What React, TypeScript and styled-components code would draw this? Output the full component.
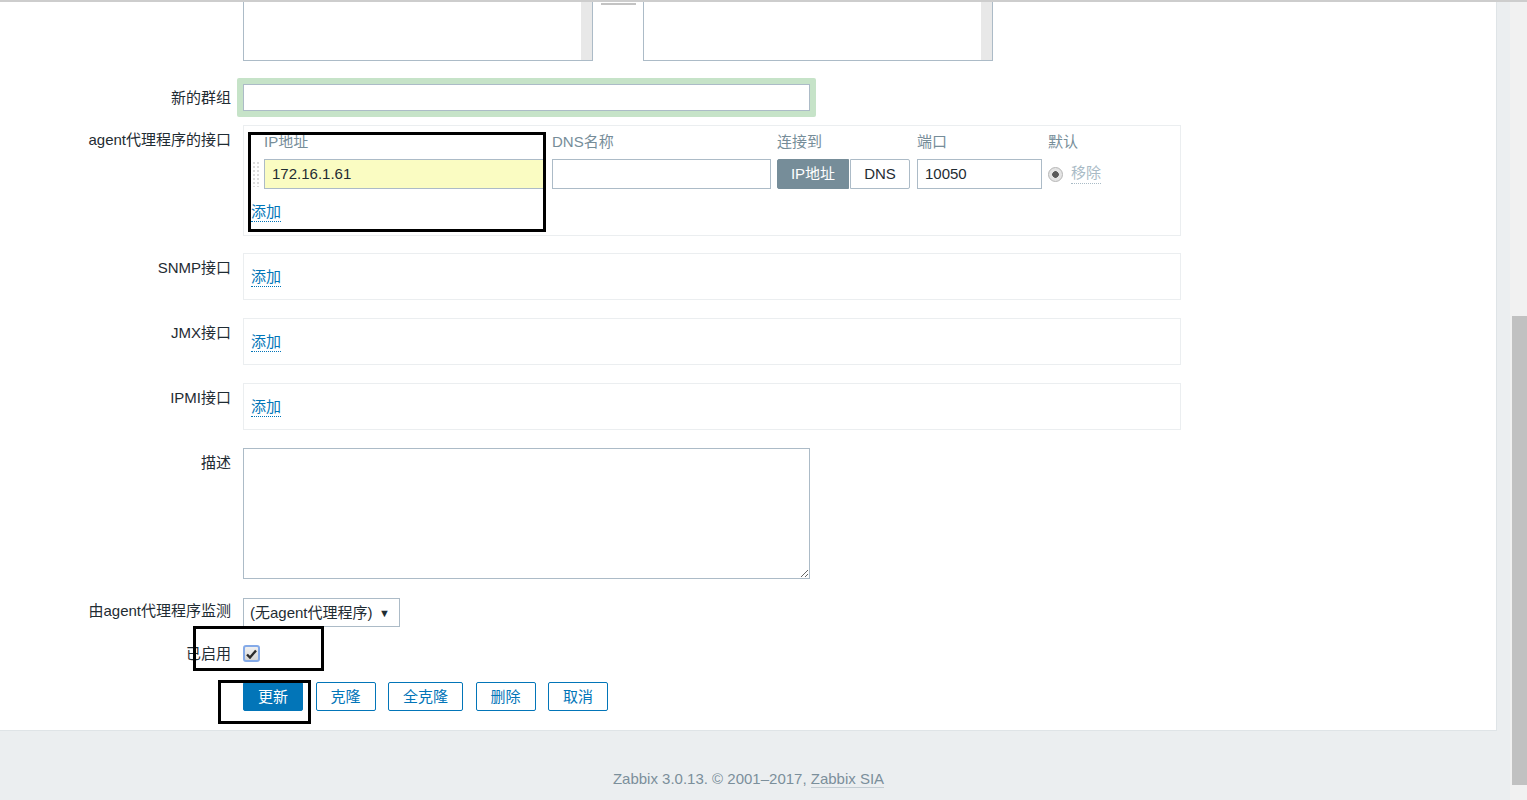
import styled, { createGlobalStyle } from 'styled-components';

const GlobalStyle = createGlobalStyle`
  html, body {
    margin: 0;
    padding: 0;
    overflow: hidden;
  }
  body {
    font-family: "Liberation Sans", "Noto Sans CJK SC", sans-serif;
    font-size: 15px;
    line-height: 18px;
    color: #1f2c33;
  }
`;

const Shell = styled.div`
  display: flex;
  flex-direction: column;
  height: 800px;
  border-top: 2px solid #cdcdcd;
  box-sizing: border-box;
`;

const Body = styled.div`
  flex: 1;
  display: flex;
  min-height: 0;
`;

const Page = styled.div`
  flex: 1;
  display: flex;
  flex-direction: column;
  background: #ebeef0;
`;

const Content = styled.div`
  position: relative;
  background: #fff;
  margin-right: 13px;
  border-right: 1px solid #dfe4e7;
  border-bottom: 1px solid #dfe4e7;
  padding-bottom: 19px;
`;

const Row = styled.div<{ $top?: number }>`
  display: flex;
  align-items: flex-start;
  margin-top: ${p => p.$top ?? 0}px;
`;

const Label = styled.div<{ $pt?: number }>`
  flex-shrink: 0;
  width: 231px;
  margin-right: 12px;
  padding-top: ${p => p.$pt ?? 0}px;
  text-align: right;
  line-height: 18px;
  white-space: nowrap;
`;

/* top two list boxes, cut off by the scroll */
const Lists = styled.div`
  display: flex;
  align-items: flex-start;
`;

const ListBox = styled.div`
  width: 348px;
  height: 58px;
  display: flex;
  justify-content: flex-end;
  border: 1px solid #acbbc7;
  border-top: none;
`;

const ListScroll = styled.div`
  width: 11px;
  background: #e8e8e8;
`;

const MoveButtons = styled.div`
  width: 35px;
  height: 2px;
  margin: 1px 7px 0 8px;
  background: #c3c3c3;
`;

const GroupFrame = styled.div`
  padding: 6px;
  margin-left: -6px;
  background: #c6e3c8;
  border-radius: 2px;
`;

const TextInput = styled.div<{ $w: number; $h?: number; $bg?: string }>`
  box-sizing: border-box;
  width: ${p => p.$w}px;
  height: ${p => p.$h ?? 30}px;
  padding: 0 7px;
  border: 1px solid #acbbc7;
  background: ${p => p.$bg ?? '#fff'};
  line-height: ${p => (p.$h ?? 30) - 2}px;
  color: #1f2c33;
  white-space: nowrap;
`;

const IfaceBox = styled.div<{ $pad?: string }>`
  box-sizing: border-box;
  width: 938px;
  border: 1px solid #ebeef0;
  padding: ${p => p.$pad ?? '14px 7px 13px'};
  line-height: 18px;
`;

const IfaceGrid = styled.div`
  display: grid;
  grid-template-columns: 13px 288px 225px 140px 131px 1fr;
  grid-template-rows: 18px 30px;
  row-gap: 8px;
  align-items: center;
`;

const Head = styled.div`
  color: #768d99;
  line-height: 18px;
`;

const Handle = styled.div`
  width: 8px;
  height: 26px;
  margin-left: 1px;
  background-image: radial-gradient(circle, #dcdcdc 1px, transparent 1.3px);
  background-size: 4px 4px;
`;

const SwitchGroup = styled.div`
  display: flex;
  height: 30px;
`;

const SwitchButton = styled.div<{ $on?: boolean; $w: number }>`
  box-sizing: border-box;
  width: ${p => p.$w}px;
  text-align: center;
  line-height: 28px;
  border: 1px solid ${p => (p.$on ? '#768d99' : '#acbbc7')};
  background: ${p => (p.$on ? '#768d99' : '#fff')};
  color: ${p => (p.$on ? '#fff' : '#1f2c33')};
  border-radius: ${p => (p.$on ? '2px 0 0 2px' : '0 2px 2px 0')};
  margin-left: ${p => (p.$on ? 0 : 1)}px;
`;

const DefaultCell = styled.div`
  display: flex;
  align-items: center;
  gap: 8px;
`;

const Radio = styled.span`
  box-sizing: border-box;
  width: 15px;
  height: 15px;
  border-radius: 50%;
  border: 1px solid #b5b5b5;
  background: radial-gradient(circle, #5a5a5a 3px, #e4e4e4 3.6px);
`;

const Link = styled.span<{ $muted?: boolean }>`
  color: ${p => (p.$muted ? '#a9bbc6' : '#0275b8')};
  line-height: 18px;
  padding-bottom: 1px;
  border-bottom: 1px dotted ${p => (p.$muted ? '#a9bbc6' : '#0275b8')};
`;

const AddRow = styled.div`
  margin-top: 14px;
  line-height: 18px;
`;

const TextArea = styled.textarea`
  box-sizing: border-box;
  width: 567px;
  height: 131px;
  border: 1px solid #acbbc7;
  border-radius: 0;
  margin: 0;
  resize: both;
  font: inherit;
`;

const Select = styled.div`
  box-sizing: border-box;
  width: 157px;
  height: 29px;
  display: flex;
  align-items: center;
  justify-content: space-between;
  padding: 0 9px 0 6px;
  border: 1px solid #acbbc7;
  white-space: nowrap;
`;

const Caret = styled.span`
  font-size: 11px;
  color: #1f2c33;
`;

const Check = styled.span`
  box-sizing: border-box;
  display: flex;
  align-items: center;
  justify-content: center;
  width: 17px;
  height: 17px;
  border: 2px solid #84aae8;
  border-radius: 3px;
  background: linear-gradient(#f0f0f0, #d6d6d6);
`;

const Buttons = styled.div`
  display: flex;
  gap: 12.5px;
`;

const Button = styled.button<{ $primary?: boolean }>`
  height: 29px;
  padding: 0 14px;
  border: 1px solid #0275b8;
  border-radius: 2px;
  background: ${p => (p.$primary ? '#0275b8' : '#fff')};
  color: ${p => (p.$primary ? '#fff' : '#0275b8')};
  font: inherit;
  line-height: 27px;
`;

const Mark = styled.div<{ $x: number; $y: number; $w: number; $h: number }>`
  position: absolute;
  left: ${p => p.$x}px;
  top: ${p => p.$y}px;
  width: ${p => p.$w}px;
  height: ${p => p.$h}px;
  box-sizing: border-box;
  border: 3px solid #000;
  pointer-events: none;
`;

const Footer = styled.div`
  flex: 1;
  margin-right: 13px;
  padding-top: 39px;
  text-align: center;
  color: #7b8f9b;
  line-height: 18px;
`;

const FooterLink = styled.span`
  border-bottom: 1px solid #c3ccd2;
`;

const ScrollBar = styled.div`
  width: 17px;
  display: flex;
  flex-direction: column;
  background: #f1f1f1;
`;

const Arrow = styled.div<{ $down?: boolean }>`
  height: 15px;
  display: flex;
  align-items: center;
  justify-content: center;
  ::after {
    content: '';
    border-left: 4px solid transparent;
    border-right: 4px solid transparent;
    ${p =>
      p.$down
        ? 'border-top: 4px solid #a3a3a3;'
        : 'border-bottom: 4px solid #505050;'}
  }
`;

const Track = styled.div`
  flex: 1;
  display: flex;
  flex-direction: column;
  justify-content: flex-end;
`;

const Thumb = styled.div`
  height: 469px;
  margin-left: 2px;
  background: #c1c1c1;
`;

const otherIfaces = ['SNMP接口', 'JMX接口', 'IPMI接口'];

function App() {
  return (
    <>
      <GlobalStyle />
      <Shell>
        <Body>
          <Page>
            <Content>
              <Row>
                <Label />
                <Lists>
                  <ListBox>
                    <ListScroll />
                  </ListBox>
                  <MoveButtons />
                  <ListBox>
                    <ListScroll />
                  </ListBox>
                </Lists>
              </Row>

              <Row $top={17}>
                <Label $pt={11}>新的群组</Label>
                <GroupFrame>
                  <TextInput $w={567} $h={27} />
                </GroupFrame>
              </Row>

              <Row $top={8}>
                <Label $pt={6}>agent代理程序的接口</Label>
                <IfaceBox $pad="7px 7px 14px">
                  <IfaceGrid>
                    <span />
                    <Head>IP地址</Head>
                    <Head>DNS名称</Head>
                    <Head>连接到</Head>
                    <Head>端口</Head>
                    <Head>默认</Head>
                    <Handle />
                    <TextInput $w={281} $bg="#fafcc2">172.16.1.61</TextInput>
                    <TextInput $w={219} />
                    <SwitchGroup>
                      <SwitchButton $on $w={72}>IP地址</SwitchButton>
                      <SwitchButton $w={60}>DNS</SwitchButton>
                    </SwitchGroup>
                    <TextInput $w={125}>10050</TextInput>
                    <DefaultCell>
                      <Radio />
                      <Link $muted>移除</Link>
                    </DefaultCell>
                  </IfaceGrid>
                  <AddRow>
                    <Link>添加</Link>
                  </AddRow>
                </IfaceBox>
              </Row>

              {otherIfaces.map((name, i) => (
                <Row key={name} $top={i === 0 ? 17 : 18}>
                  <Label $pt={6}>{name}</Label>
                  <IfaceBox>
                    <Link>添加</Link>
                  </IfaceBox>
                </Row>
              ))}

              <Row $top={18}>
                <Label $pt={6}>描述</Label>
                <TextArea />
              </Row>

              <Row $top={19}>
                <Label $pt={4}>由agent代理程序监测</Label>
                <Select>
                  (无agent代理程序)
                  <Caret>▼</Caret>
                </Select>
              </Row>

              <Row $top={18}>
                <Label $pt={0}>已启用</Label>
                <Check>
                  <svg width="11" height="10" viewBox="0 0 11 10">
                    <path d="M1 5.5 L4 8.5 L10 1.5" fill="none" stroke="#2b2b2b" strokeWidth="2.4" />
                  </svg>
                </Check>
              </Row>

              <Row $top={19}>
                <Label />
                <Buttons>
                  <Button $primary>更新</Button>
                  <Button>克隆</Button>
                  <Button>全克隆</Button>
                  <Button>删除</Button>
                  <Button>取消</Button>
                </Buttons>
              </Row>

              <Mark $x={248} $y={130} $w={298} $h={100} />
              <Mark $x={193} $y={624} $w={131} $h={45} />
              <Mark $x={218} $y={678} $w={93} $h={44} />
            </Content>
            <Footer>
              Zabbix 3.0.13. © 2001–2017, <FooterLink>Zabbix SIA</FooterLink>
            </Footer>
          </Page>
          <ScrollBar>
            <Arrow />
            <Track>
              <Thumb />
            </Track>
            <Arrow $down />
          </ScrollBar>
        </Body>
      </Shell>
    </>
  );
}

export default App;
